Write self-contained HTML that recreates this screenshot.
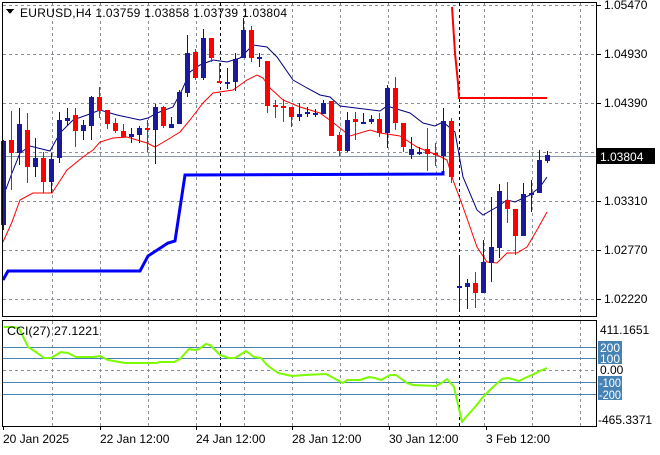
<!DOCTYPE html>
<html><head><meta charset="utf-8"><style>
html,body{margin:0;padding:0;background:#fff;}
body{width:660px;height:450px;overflow:hidden;}
svg text{font-family:"Liberation Sans",sans-serif;font-size:12px;fill:#000;}
</style></head><body>
<svg id="s" width="660" height="450" xmlns="http://www.w3.org/2000/svg" shape-rendering="crispEdges">
<rect width="660" height="450" fill="#fff"/>
<g id="grid" stroke="#8a9099" stroke-dasharray="3,3" stroke-width="1"></g>
<line x1="3" y1="156.5" x2="597" y2="156.5" stroke="#8a98a8"/>
<line x1="220.5" y1="3" x2="220.5" y2="316" stroke="#000" stroke-dasharray="3,3"/>
<line x1="459.5" y1="3" x2="459.5" y2="316" stroke="#000" stroke-dasharray="3,3"/>
<line x1="220.5" y1="321" x2="220.5" y2="426" stroke="#000" stroke-dasharray="3,3"/>
<line x1="459.5" y1="321" x2="459.5" y2="426" stroke="#000" stroke-dasharray="3,3"/>
<g id="lv" stroke="#4682B4"></g>
<polyline fill="none" stroke="#0000ff" stroke-width="3" shape-rendering="auto" points="3,280 8,271 140,271 148,256 168,243 175,241 185,175 443,174 443,171"/>
<polyline fill="none" stroke="#ff0000" stroke-width="2" shape-rendering="auto" points="452,7 455,53 458,83 459,98 547,98"/>
<polyline fill="none" stroke="#000080" stroke-width="1" shape-rendering="auto" points="3,197 12,173 20,153 30,146 50,151 60,133 73,120 87,115 100,110 117,115 140,120 148,118 157,113 173,107 182,90 190,72 200,65 213,60 227,62 240,58 253,45 267,47 277,57 293,80 307,88 320,95 330,97 340,106 380,111 387,106 410,113 423,123 435,126 443,122 455,132 463,177 477,210 483,215 497,207 507,200 515,202 530,195 540,187 547,177"/>
<polyline fill="none" stroke="#ff0000" stroke-width="1" shape-rendering="auto" points="3,242 12,222 20,200 33,193 52,193 67,170 83,157 93,150 100,142 113,138 127,137 137,140 147,143 155,147 167,140 180,132 190,120 203,103 213,93 233,90 247,80 257,75 263,78 270,88 283,100 300,107 320,113 335,124 350,136 370,130 380,133 400,136 417,147 437,155 447,160 453,180 463,207 477,247 487,262 497,263 507,253 517,253 527,247 537,230 547,212"/>
<g id="c"></g>
<polyline fill="none" stroke="#7CFC00" stroke-width="2" shape-rendering="auto" stroke-linejoin="round" points="4,327 13,327 19,328 28,347 36,352 44,358 51,358 61,352 68,353 76,357 93,357 100,356 108,360 114,361 125,363 157,363 159,362 174,362 180,359 189,349 195,350 199,349 206,344 210,345 220,355 229,358 235,358 246,351 254,357 261,358 267,365 278,373 292,376 305,375 326,374 343,383 347,380 360,380 369,377 375,378 381,380 390,375 396,375 407,383 413,385 436,386 443,382 447,379 454,387 462,422 466,417 475,407 483,397 492,388 502,379 508,378 519,381 525,378 534,374 542,370 547,368"/>
<rect x="2.5" y="2.5" width="594" height="314" fill="none" stroke="#000"/>
<rect x="2.5" y="320.5" width="594" height="106" fill="none" stroke="#000"/>
<g id="ticks" stroke="#000"></g>
<polygon points="6,9 14,9 10,14" fill="#000"/>
<text x="20" y="17" textLength="267" lengthAdjust="spacing">EURUSD,H4  1.03759 1.03858 1.03739 1.03804</text>
<text x="7" y="335" textLength="92" lengthAdjust="spacingAndGlyphs">CCI(27) 27.1221</text>
<g id="ax"></g>
<rect x="597" y="148" width="58" height="16" fill="#000"/>
<text x="600" y="161" style="fill:#fff">1.03804</text>
<rect x="598" y="341" width="24" height="23" fill="#4682B4"/>
<rect x="598" y="376" width="24" height="24" fill="#4682B4"/>
<text x="600" y="352" style="fill:#fff">200</text>
<text x="600" y="363" style="fill:#fff">100</text>
<text x="599" y="387" style="fill:#fff" textLength="22" lengthAdjust="spacingAndGlyphs">-100</text>
<text x="599" y="399" style="fill:#fff" textLength="22" lengthAdjust="spacingAndGlyphs">-200</text>
<text x="600" y="374">0.00</text>
<text x="600" y="334">411.1651</text>
<text x="598" y="424">-465.3371</text>
<text x="3" y="443">20 Jan 2025</text>
<text x="100" y="443">22 Jan 12:00</text>
<text x="196" y="443">24 Jan 12:00</text>
<text x="292" y="443">28 Jan 12:00</text>
<text x="389" y="443">30 Jan 12:00</text>
<text x="486" y="443">3 Feb 12:00</text>
</svg>
<script>
var NS="http://www.w3.org/2000/svg";
function el(p,t,a){var e=document.createElementNS(NS,t);for(var k in a)e.setAttribute(k,a[k]);document.getElementById(p).appendChild(e);return e;}
var vx=[52,100,148,196,244,292,340,388,436,484,532,580];
vx.forEach(function(x){el("grid","line",{x1:x+.5,y1:3,x2:x+.5,y2:316});el("grid","line",{x1:x+.5,y1:321,x2:x+.5,y2:426});});
[5,54,103,152,201,250,299].forEach(function(y){el("grid","line",{x1:3,y1:y+.5,x2:597,y2:y+.5});});
el("grid","line",{x1:3,y1:370.5,x2:597,y2:370.5});
[347,358,382,394].forEach(function(y){el("lv","line",{x1:3,y1:y+.5,x2:597,y2:y+.5});});
var labs=[[5,"1.05470"],[54,"1.04930"],[103,"1.04390"],[201,"1.03310"],[250,"1.02770"],[299,"1.02220"]];
labs.forEach(function(l){el("ticks","line",{x1:597,y1:l[0]+.5,x2:601,y2:l[0]+.5});var t=el("ax","text",{x:604,y:l[0]+4});t.textContent=l[1];});
[3,100,196,292,389,486].forEach(function(x){el("ticks","line",{x1:x+.5,y1:426,x2:x+.5,y2:430});});
var C=[
["b",141,225,140,230],["r",140,153,111,190],["b",124,153,108,165],["r",130,167,113,183],["b",158,167,138,177],
["r",158,182,152,193],["b",159,182,153,193],["b",120,158,112,163],["b",118,121,108,125],["r",115,131,108,147],
["b",125,131,120,140],["b",97,126,96,140],["r",97,111,87,118],["r",110,124,110,129],["r",123,131,118,133],
["r",131,137,124,137],["b",134,137,128,143],["b",128,135,126,143],["r",128,129,120,152],["b",107,130,104,164],
["r",107,126,106,128],["b",124,128,117,128],["b",92,124,90,124],["b",53,93,35,97],["r",52,78,49,80],
["b",38,78,29,80],["r",38,58,38,62],["r",81,83,63,83],["b",82,83,68,89],["b",59,82,53,91],
["b",30,58,18,58],["r",30,58,26,62],["b",57,59,53,67],["r",61,106,61,113],["r",105,107,100,118],
["r",106,108,99,122],["r",107,117,107,127],["b",114,117,103,121],["b",112,114,107,117],["b",113,115,109,117],
["b",103,114,100,114],["r",101,136,101,136],["r",135,151,132,156],["b",120,151,112,152],["r",119,122,112,140],
["b",122,123,113,124],["b",119,122,115,124],["r",119,133,113,137],["b",88,133,85,148],["r",88,123,77,130],
["r",123,147,123,152],["b",149,155,137,159],["b",152,153,147,155],["r",149,154,128,171],["r",153,155,143,166],
["b",121,156,108,175],["r",121,177,118,183],["b",286,287,255,310],["b",283,287,279,309],["r",283,293,272,308],
["b",262,293,240,293],["b",247,263,197,282],["b",191,248,184,258],["r",200,209,182,223],["r",209,236,209,255],
["b",194,236,183,236],["b",193,195,180,212],["b",160,193,150,193],["b",155,161,151,163]];
C.forEach(function(c,i){var x=3+8*i;var wc=c[0]=="b"?"#0000ff":"#ff0000";var bc=c[0]=="b"?"#1a1a9a":"#ff0000";
el("c","rect",{x:x,y:c[3],width:1,height:Math.max(1,c[4]-c[3]),fill:wc});
var h=c[2]-c[1];if(h<2){el("c","rect",{x:x-2,y:c[1],width:5,height:2,fill:bc});}
else el("c","rect",{x:x-2,y:c[1],width:5,height:h,fill:bc});});
</script>
</body></html>
